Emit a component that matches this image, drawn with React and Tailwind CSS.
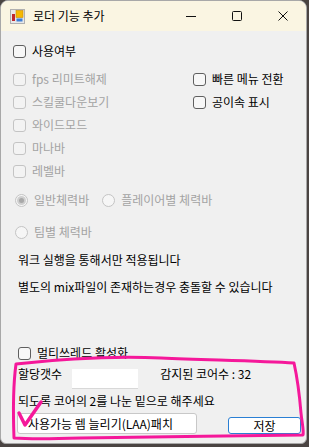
import React from 'react';

const font = { fontFamily: '"Noto Sans CJK KR", "Noto Sans", sans-serif' };

// Windows-style checkbox with label
const Check = ({ label, disabled, className = '' }) => (
  <div className={`flex items-center h-[16px] ${className}`}>
    <span
      className={`w-[13px] h-[13px] rounded-[3px] border shrink-0 ${
        disabled ? 'border-[#c4c4c4] bg-[#f3f3f3]' : 'border-[#5f5f5f] bg-[#f7f7f7]'
      }`}
    />
    <span className={`ml-[6px] text-[12px] leading-[16px] whitespace-nowrap ${disabled ? 'text-[#a3a3a3]' : 'text-black'}`}>
      {label}
    </span>
  </div>
);

const Radio = ({ label, checked, className = '' }) => (
  <div className={`flex items-center h-[16px] ${className}`}>
    <span className="w-[13px] h-[13px] rounded-full border border-[#c4c4c4] bg-[#f6f6f6] flex items-center justify-center shrink-0">
      {checked && <span className="w-[5px] h-[5px] rounded-full bg-[#a8a8a8] ring-[2px] ring-[#cfcfcf]" />}
    </span>
    <span className="ml-[6px] text-[12px] leading-[16px] text-[#a3a3a3] whitespace-nowrap">{label}</span>
  </div>
);

const AppIcon = () => (
  <svg width="15" height="15" viewBox="0 0 15 15">
    <rect x="0.5" y="0.5" width="14" height="14" fill="#e8e8e8" stroke="#b0b0b0" />
    <rect x="2" y="5" width="3" height="7" fill="#c0282d" />
    <rect x="6" y="1.5" width="7" height="7" fill="#f5b800" stroke="#c98a00" strokeWidth="0.6" />
    <rect x="6.5" y="9.5" width="6" height="3" fill="#3c7ed6" />
  </svg>
);

export default function App() {
  return (
    <div className="w-[309px] h-[447px] bg-[#4a4442] overflow-hidden" style={font}>
      <div className="relative w-[307px] h-[444px] bg-[#f0f0f0] rounded-t-[8px] rounded-b-[6px] border border-[#a8a8a8] overflow-hidden">
        {/* title bar */}
        <div className="h-[30px] bg-[#faf5e2] flex items-center">
          <div className="ml-[9px]">
            <AppIcon />
          </div>
          <span className="ml-[8px] text-[12px] text-black">로더 기능 추가</span>
          <div className="ml-auto flex items-center h-full">
            <div className="w-[46px] h-full flex items-center justify-center">
              <svg width="10" height="10" viewBox="0 0 10 10"><line x1="0" y1="5.5" x2="10" y2="5.5" stroke="#111" strokeWidth="1" /></svg>
            </div>
            <div className="w-[46px] h-full flex items-center justify-center">
              <svg width="10" height="10" viewBox="0 0 10 10"><rect x="0.5" y="0.5" width="9" height="9" rx="1" fill="none" stroke="#111" strokeWidth="1" /></svg>
            </div>
            <div className="w-[46px] h-full flex items-center justify-center">
              <svg width="10" height="10" viewBox="0 0 10 10"><path d="M0.5 0.5L9.5 9.5M9.5 0.5L0.5 9.5" stroke="#111" strokeWidth="1" /></svg>
            </div>
          </div>
        </div>

        {/* body */}
        <div className="pl-[12px] pt-[12px]">
          <Check label="사용여부" />

          <div className="flex mt-[12px]">
            <div className="flex flex-col gap-[7px] w-[180px]">
              <Check label="fps 리미트해제" disabled />
              <Check label="스킬쿨다운보기" disabled />
              <Check label="와이드모드" disabled />
              <Check label="마나바" disabled />
              <Check label="레벨바" disabled />
            </div>
            <div className="flex flex-col gap-[7px]">
              <Check label="빠른 메뉴 전환" />
              <Check label="공이속 표시" />
            </div>
          </div>

          <div className="flex mt-[13px] pl-[2px]">
            <Radio label="일반체력바" checked />
            <Radio label="플레이어별 체력바" className="ml-[13px]" />
          </div>
          <Radio label="팀별 체력바" className="mt-[16px] pl-[2px]" />

          <div className="mt-[12px] pl-[5px] text-[12px] leading-[16px] text-black">워크 실행을 통해서만 적용됩니다</div>
          <div className="mt-[11px] pl-[5px] text-[12px] leading-[16px] text-black whitespace-nowrap">별도의 mix파일이 존재하는경우 충돌할 수 있습니다</div>

          <Check label="멀티쓰레드 활성화" className="mt-[50px] pl-[5px]" />

          <div className="flex mt-[1px] pl-[5px] h-[30px]">
            <span className="text-[12px] leading-[16px] mt-[4px]">할당갯수</span>
            <div className="ml-[10px] mt-[7px] w-[66px] h-[20px] bg-white border-b border-[#d8d8d8]" />
            <span className="ml-[22px] mt-[4px] text-[12px] leading-[16px]">감지된 코어수 : 32</span>
          </div>

          <div className="mt-[1px] pl-[5px] text-[12px] leading-[16px]">되도록 코어의 2를 나눈 밑으로 해주세요</div>

          <div className="flex items-end mt-[4px] pl-[4px]">
            <div className="w-[180px] h-[21px] bg-white border border-[#c8c8c8] rounded-[3px] flex items-center pl-[10px] text-[12px] leading-[16px] whitespace-nowrap">
              사용가능 렘 늘리기(LAA)패치
            </div>
            <div className="ml-[31px] w-[73px] h-[17px] bg-white border border-[#2a7fd4] rounded-[3px] flex items-center justify-center text-[12px] leading-[14px]">
              저장
            </div>
          </div>
        </div>

        {/* pink hand-drawn annotation */}
        <svg className="absolute left-0 top-0 pointer-events-none" width="307" height="444" viewBox="0 0 307 444">
          <path
            d="M15 363 C 60 358, 110 355, 160 357 C 210 359, 260 360, 293 362 C 297 380, 299 400, 300 412 C 301 422, 303 430, 302 434 C 230 435, 150 436, 80 437 C 50 438, 25 438, 13 437 C 12 410, 12 385, 15 363 Z"
            fill="none"
            stroke="#f5189a"
            strokeWidth="3"
            strokeLinejoin="round"
          />
          <path d="M18 412 L 24 424 L 40 401" fill="none" stroke="#f5189a" strokeWidth="3.5" strokeLinecap="round" strokeLinejoin="round" />
        </svg>
      </div>
    </div>
  );
}
